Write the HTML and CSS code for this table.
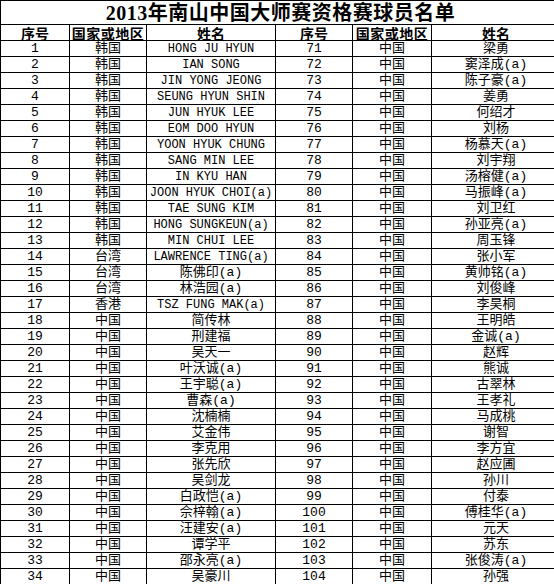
FILE: index.html
```html
<!DOCTYPE html>
<html lang="zh-CN">
<head>
<meta charset="utf-8">
<title>2013年南山中国大师赛资格赛球员名单</title>
<link rel="stylesheet" href="styles.css">
</head>
<body>
<div class="sheet">
  <div class="title">2013年南山中国大师赛资格赛球员名单</div>
  <div class="hd">序号</div><div class="hd wide">国家或地区</div><div class="hd">姓名</div>
  <div class="hd">序号</div><div class="hd wide">国家或地区</div><div class="hd">姓名</div>

  <div>1</div><div>韩国</div><div class="en">HONG JU HYUN</div><div>71</div><div>中国</div><div>梁勇</div>
  <div>2</div><div>韩国</div><div class="en">IAN SONG</div><div>72</div><div>中国</div><div>窦泽成(a)</div>
  <div>3</div><div>韩国</div><div class="en">JIN YONG JEONG</div><div>73</div><div>中国</div><div>陈子豪(a)</div>
  <div>4</div><div>韩国</div><div class="en">SEUNG HYUN SHIN</div><div>74</div><div>中国</div><div>姜勇</div>
  <div>5</div><div>韩国</div><div class="en">JUN HYUK LEE</div><div>75</div><div>中国</div><div>何绍才</div>
  <div>6</div><div>韩国</div><div class="en">EOM DOO HYUN</div><div>76</div><div>中国</div><div>刘杨</div>
  <div>7</div><div>韩国</div><div class="en">YOON HYUK CHUNG</div><div>77</div><div>中国</div><div>杨慕天(a)</div>
  <div>8</div><div>韩国</div><div class="en">SANG MIN LEE</div><div>78</div><div>中国</div><div>刘宇翔</div>
  <div>9</div><div>韩国</div><div class="en">IN KYU HAN</div><div>79</div><div>中国</div><div>汤榕健(a)</div>
  <div>10</div><div>韩国</div><div class="en">JOON HYUK CHOI(a)</div><div>80</div><div>中国</div><div>马振峰(a)</div>
  <div>11</div><div>韩国</div><div class="en">TAE SUNG KIM</div><div>81</div><div>中国</div><div>刘卫红</div>
  <div>12</div><div>韩国</div><div class="en">HONG SUNGKEUN(a)</div><div>82</div><div>中国</div><div>孙亚亮(a)</div>
  <div>13</div><div>韩国</div><div class="en">MIN CHUI LEE</div><div>83</div><div>中国</div><div>周玉锋</div>
  <div>14</div><div>台湾</div><div class="en">LAWRENCE TING(a)</div><div>84</div><div>中国</div><div>张小军</div>
  <div>15</div><div>台湾</div><div>陈佛印(a)</div><div>85</div><div>中国</div><div>黄帅铭(a)</div>
  <div>16</div><div>台湾</div><div>林浩园(a)</div><div>86</div><div>中国</div><div>刘俊峰</div>
  <div>17</div><div>香港</div><div class="en">TSZ FUNG MAK(a)</div><div>87</div><div>中国</div><div>李昊桐</div>
  <div>18</div><div>中国</div><div>简传林</div><div>88</div><div>中国</div><div>王明皓</div>
  <div>19</div><div>中国</div><div>刑建福</div><div>89</div><div>中国</div><div>金诚(a)</div>
  <div>20</div><div>中国</div><div>吴天一</div><div>90</div><div>中国</div><div>赵辉</div>
  <div>21</div><div>中国</div><div>叶沃诚(a)</div><div>91</div><div>中国</div><div>熊诚</div>
  <div>22</div><div>中国</div><div>王宇聪(a)</div><div>92</div><div>中国</div><div>古翠林</div>
  <div>23</div><div>中国</div><div>曹森(a)</div><div>93</div><div>中国</div><div>王孝礼</div>
  <div>24</div><div>中国</div><div>沈楠楠</div><div>94</div><div>中国</div><div>马成桃</div>
  <div>25</div><div>中国</div><div>艾金伟</div><div>95</div><div>中国</div><div>谢智</div>
  <div>26</div><div>中国</div><div>李克用</div><div>96</div><div>中国</div><div>李方宜</div>
  <div>27</div><div>中国</div><div>张先欣</div><div>97</div><div>中国</div><div>赵应圃</div>
  <div>28</div><div>中国</div><div>吴剑龙</div><div>98</div><div>中国</div><div>孙川</div>
  <div>29</div><div>中国</div><div>白政恺(a)</div><div>99</div><div>中国</div><div>付泰</div>
  <div>30</div><div>中国</div><div>佘梓翰(a)</div><div>100</div><div>中国</div><div>傅桂华(a)</div>
  <div>31</div><div>中国</div><div>汪建安(a)</div><div>101</div><div>中国</div><div>元天</div>
  <div>32</div><div>中国</div><div>谭学平</div><div>102</div><div>中国</div><div>苏东</div>
  <div>33</div><div>中国</div><div>邵永亮(a)</div><div>103</div><div>中国</div><div>张俊涛(a)</div>
  <div>34</div><div>中国</div><div>吴豪川</div><div>104</div><div>中国</div><div>孙强</div>
</div>
</body>
</html>
```
FILE: styles.css
```css
html, body {
  margin: 0;
  padding: 0;
  background: #fff;
  overflow: hidden;
}

.sheet {
  display: grid;
  grid-template-columns: 68px 76px 128px 76px 78px 128px;
  grid-template-rows: 23px;
  grid-auto-rows: 15px;
  gap: 1px;
  padding: 1px;
  width: max-content;
  background: #000;
  font-family: "Liberation Mono", "Noto Sans CJK SC", monospace;
  font-size: 13px;
  color: #000;
}

.sheet > div {
  background: #fff;
  display: flex;
  align-items: center;
  justify-content: center;
  line-height: 1;
  white-space: nowrap;
}

.sheet > .title {
  grid-column: 1 / -1;
  font-family: "Liberation Serif", "Noto Sans CJK SC", serif;
  font-size: 20px;
  font-weight: 700;
  letter-spacing: 0.5px;
  padding-top: 1px;
}

.sheet > .hd {
  font-family: "Noto Sans CJK SC", sans-serif;
  font-weight: 700;
  font-size: 14px;
}

.sheet > .hd.wide {
  letter-spacing: 0.5px;
}

.sheet > .en {
  font-size: 12px;
}
```
